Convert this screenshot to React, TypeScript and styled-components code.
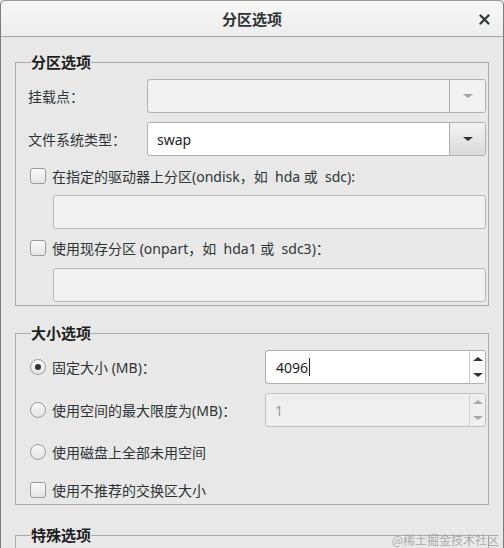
import React from "react";
import styled, { createGlobalStyle } from "styled-components";

const Global = createGlobalStyle`
  html, body {
    margin: 0;
    padding: 0;
    background: #e8e8e8;
  }
  * { box-sizing: border-box; }
`;

const Window = styled.div`
  position: relative;
  width: 504px;
  height: 548px;
  overflow: hidden;
  background: #e8e8e8;
  border-left: 1px solid #7d7d7d;
  border-right: 1px solid #7d7d7d;
  border-top: 1px solid #9a9a9a;
  border-radius: 5px 5px 0 0;
  font-family: "Noto Sans", "Noto Sans CJK SC", sans-serif;
  font-size: 14px;
  color: #2e3436;
`;

const TitleBar = styled.div`
  height: 36px;
  display: flex;
  align-items: center;
  justify-content: center;
  position: relative;
  background: linear-gradient(#f7f7f7, #ededed);
  border-bottom: 1px solid #a5a5a5;
  border-radius: 5px 5px 0 0;
`;

const Title = styled.div`
  font-family: "Noto Sans CJK SC", sans-serif;
  font-weight: 700;
  font-size: 15px;
  color: #2e3436;
`;

const Close = styled.button`
  position: absolute;
  right: 10px;
  top: 9px;
  width: 18px;
  height: 18px;
  padding: 0;
  border: none;
  background: none;
  display: flex;
  align-items: center;
  justify-content: center;
`;

const Body = styled.div`
  padding: 15px 14px 0 14px;
  display: flex;
  flex-direction: column;
`;

const Frame = styled.fieldset<{ $mt?: number }>`
  margin: ${(p) => p.$mt ?? 0}px 0 0 0;
  min-width: 0;
  border: 1px solid #aaaaaa;
  padding: 7px 2px 3px 12px;
  display: flex;
  flex-direction: column;
`;

const Legend = styled.legend`
  padding: 0;
  margin-left: 3px;
  font-family: "Noto Sans CJK SC", sans-serif;
  font-weight: 700;
  font-size: 15px;
  line-height: 20px;
  color: #1e1e1e;
`;

const Row = styled.div<{ $h?: number; $mt?: number; $labelW?: number }>`
  display: grid;
  grid-template-columns: ${(p) => (p.$labelW ? `${p.$labelW}px 1fr` : "1fr")};
  align-items: center;
  height: ${(p) => p.$h ?? 34}px;
  margin-top: ${(p) => p.$mt ?? 0}px;
`;

const Label = styled.span`
  white-space: nowrap;
  color: #2e3436;
`;

const Check = styled.span<{ $round?: boolean }>`
  width: 16px;
  height: 16px;
  flex: none;
  border: 1px solid #9c9c9c;
  border-radius: ${(p) => (p.$round ? "50%" : "3px")};
  background: linear-gradient(#fafafa, #e3e3e3);
  display: flex;
  align-items: center;
  justify-content: center;
`;

const Dot = styled.span`
  width: 6px;
  height: 6px;
  border-radius: 50%;
  background: #2e3436;
`;

const Option = styled.label`
  display: flex;
  align-items: center;
  gap: 6px;
  padding-left: 2px;
  white-space: nowrap;
`;

const Combo = styled.div<{ $disabled?: boolean }>`
  height: 34px;
  display: flex;
  border: 1px solid #b0b0b0;
  border-radius: 3px;
  background: ${(p) => (p.$disabled ? "#f1f1f1" : "#ffffff")};
  overflow: hidden;
`;

const ComboText = styled.div`
  flex: 1;
  padding-left: 9px;
  display: flex;
  align-items: center;
  color: #1e1e1e;
`;

const ArrowButton = styled.div<{ $disabled?: boolean }>`
  width: 36px;
  border-left: 1px solid #b0b0b0;
  background: ${(p) =>
    p.$disabled ? "#f1f1f1" : "linear-gradient(#f3f3f3, #d9d9d9)"};
  display: flex;
  align-items: center;
  justify-content: center;
`;

const Triangle = styled.span<{ $color: string; $up?: boolean; $size?: number }>`
  width: 0;
  height: 0;
  border-left: ${(p) => p.$size ?? 5}px solid transparent;
  border-right: ${(p) => p.$size ?? 5}px solid transparent;
  ${(p) =>
    p.$up
      ? `border-bottom: ${(p.$size ?? 5) - 1}px solid ${p.$color};`
      : `border-top: ${(p.$size ?? 5) - 1}px solid ${p.$color};`}
`;

const Entry = styled.div<{ $mt?: number }>`
  height: 34px;
  margin-left: 25px;
  margin-top: ${(p) => p.$mt ?? 0}px;
  border: 1px solid #b8b8b8;
  border-radius: 3px;
  background: #f1f1f1;
`;

const Spin = styled.div<{ $disabled?: boolean }>`
  height: 34px;
  display: flex;
  border: 1px solid ${(p) => (p.$disabled ? "#c2c2c2" : "#b0b0b0")};
  border-radius: 3px;
  background: ${(p) => (p.$disabled ? "#efefef" : "#ffffff")};
  overflow: hidden;
`;

const SpinText = styled.div<{ $focused?: boolean; $disabled?: boolean }>`
  flex: 1;
  display: flex;
  align-items: center;
  padding-left: 9px;
  color: ${(p) => (p.$disabled ? "#9a9a9a" : "#1e1e1e")};
  ${(p) =>
    p.$focused
      ? `border: 1px solid #4a90d9; border-right: none; margin: -1px 0 -1px -1px; border-radius: 3px 0 0 3px; padding-left: 10px;`
      : ""}
`;

const Caret = styled.span`
  width: 1px;
  height: 18px;
  background: #1e1e1e;
  margin-left: 1px;
`;

const SpinButtons = styled.div<{ $disabled?: boolean }>`
  width: 16px;
  display: flex;
  flex-direction: column;
  border-left: 1px solid ${(p) => (p.$disabled ? "#d2d2d2" : "#c8c8c8")};
  background: ${(p) => (p.$disabled ? "#efefef" : "#fbfbfb")};
`;

const SpinHalf = styled.div`
  flex: 1;
  display: flex;
  align-items: center;
  justify-content: center;
`;

const Watermark = styled.div`
  position: absolute;
  right: 4px;
  bottom: 0px;
  font-family: "Noto Sans CJK SC", sans-serif;
  font-size: 12px;
  line-height: 16px;
  color: rgba(160, 160, 160, 0.85);
`;

const SpinBox = ({
  value,
  focused,
  disabled,
}: {
  value: string;
  focused?: boolean;
  disabled?: boolean;
}) => {
  const c = disabled ? "#a8a8a8" : "#2e3436";
  return (
    <Spin $disabled={disabled}>
      <SpinText $focused={focused} $disabled={disabled}>
        {value}
        {focused && <Caret />}
      </SpinText>
      <SpinButtons $disabled={disabled}>
        <SpinHalf>
          <Triangle $color={c} $up $size={5} />
        </SpinHalf>
        <SpinHalf>
          <Triangle $color={c} $size={5} />
        </SpinHalf>
      </SpinButtons>
    </Spin>
  );
};

const App = (): JSX.Element => {
  return (
    <Window>
      <Global />
      <TitleBar>
        <Title>分区选项</Title>
        <Close aria-label="close">
          <svg width="11" height="11" viewBox="0 0 11 11">
            <path d="M1.5 1.5 L9.5 9.5 M9.5 1.5 L1.5 9.5" stroke="#2e3436" strokeWidth="2.2" strokeLinecap="round" />
          </svg>
        </Close>
      </TitleBar>
      <Body>
        <Frame>
          <Legend>分区选项</Legend>
          <Row $labelW={119}>
            <Label>挂载点：</Label>
            <Combo $disabled>
              <ComboText />
              <ArrowButton $disabled>
                <Triangle $color="#a0a0a0" />
              </ArrowButton>
            </Combo>
          </Row>
          <Row $labelW={119} $mt={9}>
            <Label>文件系统类型：</Label>
            <Combo>
              <ComboText>swap</ComboText>
              <ArrowButton>
                <Triangle $color="#2e3436" />
              </ArrowButton>
            </Combo>
          </Row>
          <Row $h={22} $mt={9}>
            <Option>
              <Check />
              在指定的驱动器上分区(ondisk，如&nbsp; hda 或&nbsp; sdc):
            </Option>
          </Row>
          <Entry $mt={8} />
          <Row $h={22} $mt={8}>
            <Option>
              <Check />
              使用现存分区 (onpart，如&nbsp; hda1 或&nbsp; sdc3)：
            </Option>
          </Row>
          <Entry $mt={9} />
        </Frame>

        <Frame $mt={17}>
          <Legend>大小选项</Legend>
          <Row $labelW={237}>
            <Option>
              <Check $round>
                <Dot />
              </Check>
              固定大小 (MB)：
            </Option>
            <SpinBox value="4096" focused />
          </Row>
          <Row $labelW={237} $mt={9}>
            <Option>
              <Check $round />
              使用空间的最大限度为(MB)：
            </Option>
            <SpinBox value="1" disabled />
          </Row>
          <Row $mt={8}>
            <Option>
              <Check $round />
              使用磁盘上全部未用空间
            </Option>
          </Row>
          <Row $h={22} $mt={10}>
            <Option>
              <Check />
              使用不推荐的交换区大小
            </Option>
          </Row>
        </Frame>

        <Frame $mt={20}>
          <Legend>特殊选项</Legend>
          <Row $h={40} />
        </Frame>
      </Body>
      <Watermark>@稀土掘金技术社区</Watermark>
    </Window>
  );
};

export default App;
